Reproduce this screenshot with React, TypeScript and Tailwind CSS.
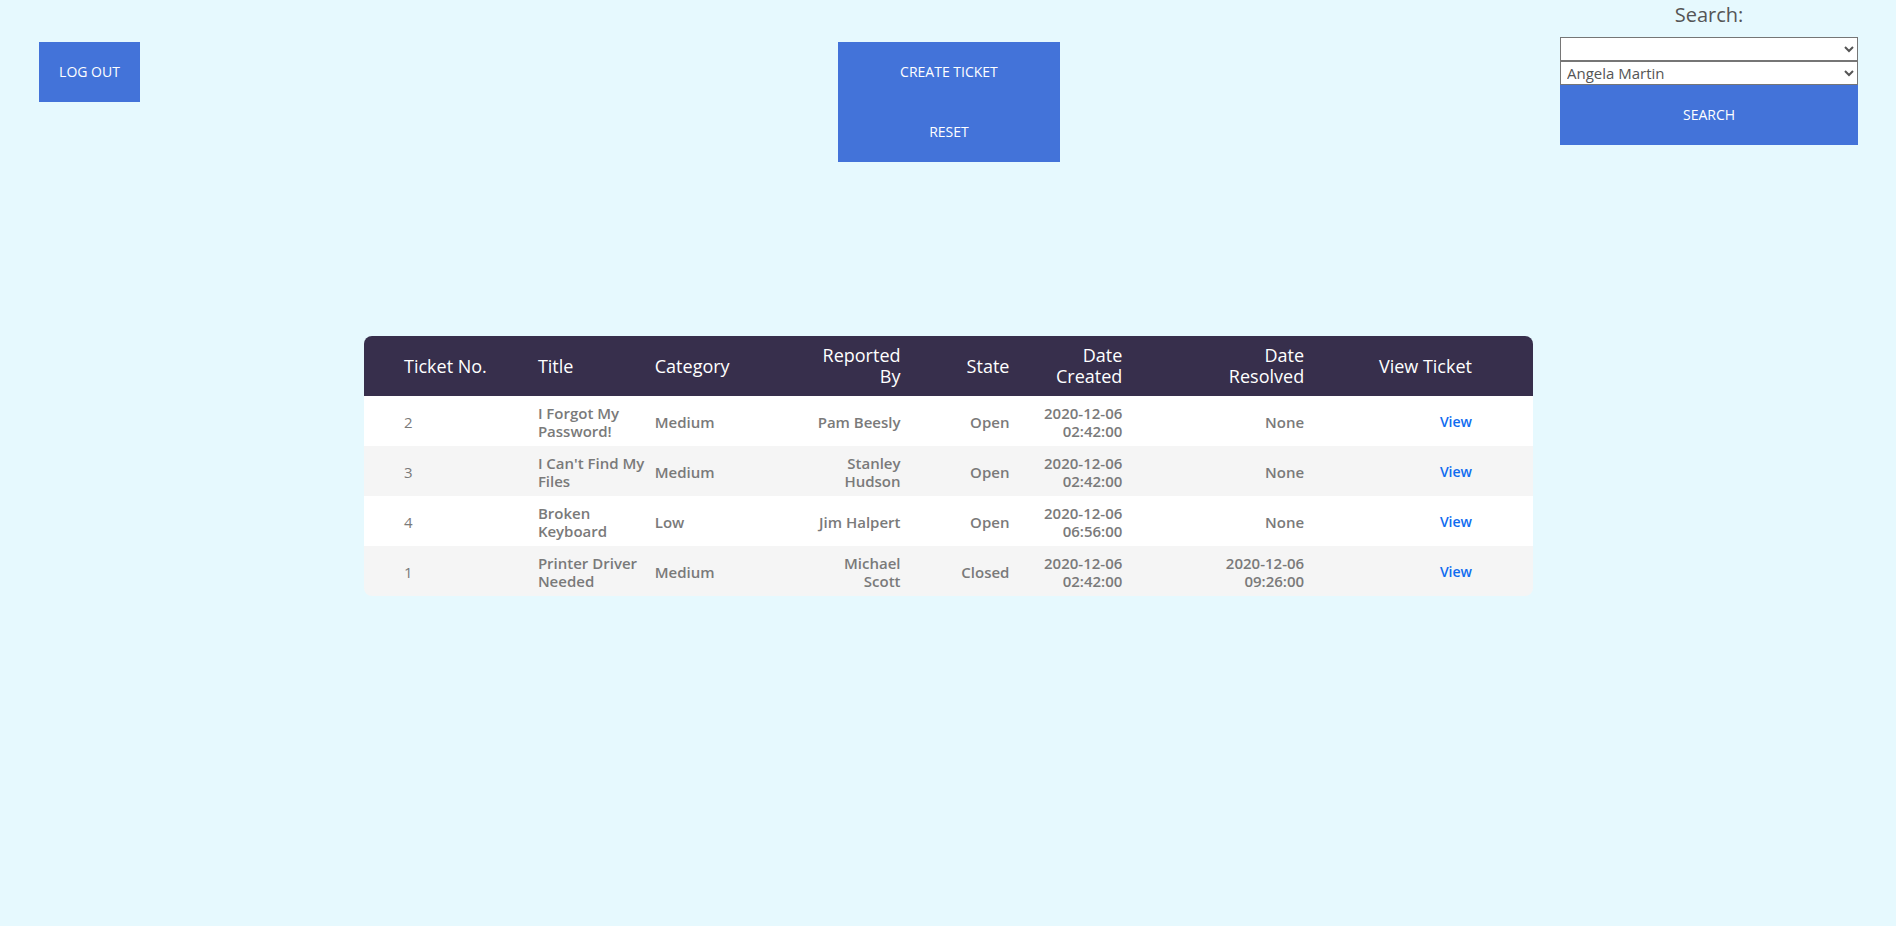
import React from "react";

interface Ticket {
  id: number;
  title: string[];
  category: string;
  reportedBy: string[];
  state: string;
  created: string[];
  resolved: string[];
}

const tickets: Ticket[] = [
  { id: 2, title: ["I Forgot My", "Password!"], category: "Medium", reportedBy: ["Pam Beesly"], state: "Open", created: ["2020-12-06", "02:42:00"], resolved: ["None"] },
  { id: 3, title: ["I Can't Find My", "Files"], category: "Medium", reportedBy: ["Stanley", "Hudson"], state: "Open", created: ["2020-12-06", "02:42:00"], resolved: ["None"] },
  { id: 4, title: ["Broken", "Keyboard"], category: "Low", reportedBy: ["Jim Halpert"], state: "Open", created: ["2020-12-06", "06:56:00"], resolved: ["None"] },
  { id: 1, title: ["Printer Driver", "Needed"], category: "Medium", reportedBy: ["Michael", "Scott"], state: "Closed", created: ["2020-12-06", "02:42:00"], resolved: ["2020-12-06", "09:26:00"] },
];

// column boxes, left to right
const cols = [
  "w-[164px] pl-[40px] text-left",
  "w-[117px] pl-[10px] text-left",
  "w-[115px] pl-[10px] text-left",
  "w-[151px] pr-[10px] text-right",
  "w-[109px] pr-[10px] text-right",
  "w-[113px] pr-[10px] text-right",
  "w-[182px] pr-[10px] text-right",
  "w-[219px] pr-[61px] text-right",
];

function Lines({ lines }: { lines: string[] }) {
  return (
    <>
      {lines.map((l) => (
        <span key={l} className="block whitespace-nowrap">
          {l}
        </span>
      ))}
    </>
  );
}

const btn =
  "flex items-center justify-center bg-[#4373d9] text-white text-[14px] leading-none";

export default function App() {
  return (
    <div
      className="min-h-[926px] w-full bg-[#e6f9fe]"
      style={{ fontFamily: '"Open Sans", "Liberation Sans", sans-serif' }}
    >
      {/* top bar */}
      <div className="grid grid-cols-3 items-start px-[38px]">
        <div className="flex justify-start pt-[42px] pl-[1px]">
          <button className={`${btn} h-[60px] w-[101px]`}>LOG OUT</button>
        </div>

        <div className="flex justify-center pt-[42px] pl-[2px]">
          <div className="flex w-[222px] flex-col">
            <button className={`${btn} h-[60px] w-full`}>CREATE TICKET</button>
            <button className={`${btn} h-[60px] w-full`}>RESET</button>
          </div>
        </div>

        <div className="flex justify-end">
          <div className="flex w-[298px] flex-col">
            <p className="h-[37px] pt-[1px] text-center text-[20px] leading-[27px] text-[#555]">Search:</p>
            <select className="h-[24px] w-full border border-[#767676] bg-white text-[15px] leading-none text-[#555]">
              <option value=""></option>
            </select>
            <select
              defaultValue="angela"
              className="h-[24px] w-full border border-[#767676] bg-white pl-[2px] text-[15px] leading-none text-[#555]"
            >
              <option value="angela">Angela Martin</option>
            </select>
            <button className={`${btn} h-[60px] w-full`}>SEARCH</button>
          </div>
        </div>
      </div>

      {/* tickets table */}
      <div className="ml-[364px] mt-[174px] w-[1169px] overflow-hidden rounded-[8px]">
        <div className="flex h-[60px] bg-[#372f4c] text-[18px] leading-[21px] text-white">
          {["Ticket No.", "Title", "Category", "Reported By", "State", "Date Created", "Date Resolved", "View Ticket"].map(
            (h, i) => (
              <div key={h} className={`flex flex-col justify-center ${cols[i]}`}>
                {h === "Reported By" ? (
                  <Lines lines={["Reported", "By"]} />
                ) : h === "Date Created" ? (
                  <Lines lines={["Date", "Created"]} />
                ) : h === "Date Resolved" ? (
                  <Lines lines={["Date", "Resolved"]} />
                ) : (
                  <span className="whitespace-nowrap">{h}</span>
                )}
              </div>
            )
          )}
        </div>

        {tickets.map((t, idx) => (
          <div
            key={t.id}
            className={`flex h-[50px] pt-[1px] text-[15px] leading-[18px] text-[#7a7a7a] ${idx % 2 === 1 ? "bg-[#f5f5f5]" : "bg-white"}`}
          >
            <div className={`flex flex-col justify-center font-normal ${cols[0]}`}>{t.id}</div>
            <div className={`flex flex-col justify-center font-semibold ${cols[1]}`}>
              <Lines lines={t.title} />
            </div>
            <div className={`flex flex-col justify-center font-semibold ${cols[2]}`}>{t.category}</div>
            <div className={`flex flex-col justify-center font-semibold ${cols[3]}`}>
              <Lines lines={t.reportedBy} />
            </div>
            <div className={`flex flex-col justify-center font-semibold ${cols[4]}`}>{t.state}</div>
            <div className={`flex flex-col justify-center font-semibold ${cols[5]}`}>
              <Lines lines={t.created} />
            </div>
            <div className={`flex flex-col justify-center font-semibold ${cols[6]}`}>
              <Lines lines={t.resolved} />
            </div>
            <div className={`flex flex-col justify-center font-semibold ${cols[7]}`}>
              <a href="#" className="text-[14px] text-[#0f6cf0]">
                View
              </a>
            </div>
          </div>
        ))}
      </div>
    </div>
  );
}
